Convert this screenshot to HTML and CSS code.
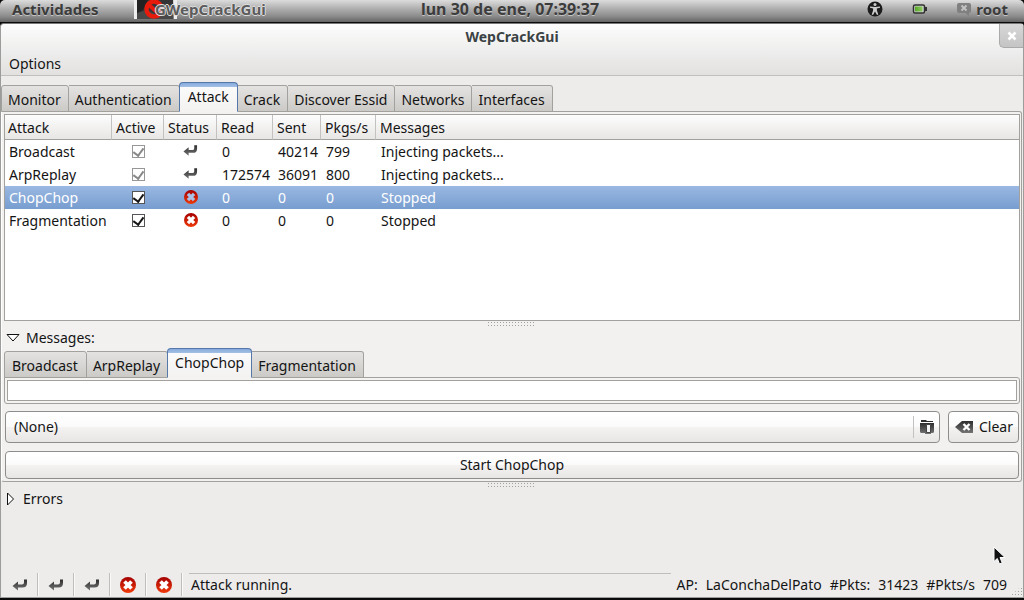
FILE: index.html
```html
<!DOCTYPE html>
<html lang="es">
<head>
<meta charset="utf-8">
<title>WepCrackGui</title>
<link rel="stylesheet" href="styles.css">
</head>
<body>
<svg class="defs" aria-hidden="true">
  <defs>
    <linearGradient id="red" x1="0" y1="0" x2="0" y2="1"><stop offset="0" stop-color="#a40000"/><stop offset="1" stop-color="#f03a0a"/></linearGradient>
    <linearGradient id="grey" x1="0" y1="0" x2="0" y2="1"><stop offset="0" stop-color="#2e2e2e"/><stop offset="1" stop-color="#747474"/></linearGradient>
    <linearGradient id="green" x1="0" y1="0" x2="1" y2="0"><stop offset="0" stop-color="#58a828"/><stop offset="1" stop-color="#8ccb62"/></linearGradient>
  </defs>
  <symbol id="enter" viewBox="0 0 16 16"><path fill="url(#grey)" d="M.5 9 6 4.500V7.500h4q2 0 2-2V2.500h3V6q0 4.500-4.500 4.500H6v3z"/></symbol>
  <symbol id="stop" viewBox="0 0 16 16"><circle cx="8" cy="8" r="8" fill="url(#red)"/><path d="M4.500 4.500 11.500 11.500M11.500 4.500 4.500 11.500" stroke="currentColor" stroke-width="3.800"/></symbol>
</svg>

<header class="panel">
  <button class="panel-item activities">Actividades</button>
  <button class="panel-item app">
    <svg class="app-icon" width="43" height="19" viewBox="0 0 43 19" aria-hidden="true">
      <path fill="#eee" d="M0 0h3v19H0zM40 0h3v19h-3z"/><path fill="#343434" d="M3 0h36v19H3z"/>
      <path fill="#484848" d="m3 13 10-3 8 4 18-3v8H3z"/><path fill="#222" d="M3 0h11L9 10 3 13z"/>
      <circle cx="20" cy="9" r="7.500" fill="none" stroke="#e61b0c" stroke-width="4.500"/><path d="m14 4 11 10" stroke="#e61b0c" stroke-width="4"/>
      <path d="m23 8 5 2" stroke="#f7776b" stroke-width="3"/>
    </svg>
    <span class="app-name">GWepCrackGui</span>
  </button>
  <time class="clock">lun 30 de ene, 07:39:37</time>
  <div class="tray">
    <svg width="16" height="16" viewBox="0 0 16 16" role="img" aria-label="Accesibilidad"><circle cx="8" cy="8" r="7.500" fill="#1c1c1c"/><circle cx="8" cy="3.600" r="1.500" fill="#ccc"/><path fill="#ccc" d="M3 5.500 8 6l5-.5v1.300l-3.200.7.200 2.300 1.300 3.700-1.300.5L8 10.500 6 14l-1.300-.5L6 9.800l.2-2.300L3 6.800z"/></svg>
    <svg width="16" height="12" viewBox="0 0 16 12" role="img" aria-label="Batería"><rect x="1.500" y="2" width="11" height="8" rx="1.500" fill="#d5d5d5" stroke="#303030" stroke-width="1.500"/><path fill="#303030" d="M13 4h2v4h-2z"/><path fill="url(#green)" d="M3 3.500h7.500v5H3z"/></svg>
    <button class="panel-item user"><svg width="14" height="13" viewBox="0 0 14 13" aria-hidden="true"><path fill="#808080" d="M2 0h10q2 0 2 2v6q0 2-2 2v3l-3.500-3H2Q0 10 0 8V2Q0 0 2 0z"/><path d="m4.500 2.500 5 5m0-5-5 5" stroke="#c4c4c4" stroke-width="1.800"/></svg>root</button>
  </div>
</header>

<main class="window">
  <div class="chrome">
    <h1 class="title">WepCrackGui</h1>
    <button class="close" aria-label="Cerrar"><svg width="10" height="10" viewBox="0 0 10 10" aria-hidden="true"><path d="m1.500 1.500 7 7m0-7-7 7" stroke="#fff" stroke-width="2.600"/></svg></button>
    <nav class="menubar"><button class="menu">Options</button></nav>
  </div>

  <div class="tabs main-tabs" role="tablist">
    <button class="tab" role="tab">Monitor</button>
    <button class="tab" role="tab">Authentication</button>
    <button class="tab active" role="tab" aria-selected="true">Attack</button>
    <button class="tab" role="tab">Crack</button>
    <button class="tab" role="tab">Discover Essid</button>
    <button class="tab" role="tab">Networks</button>
    <button class="tab" role="tab">Interfaces</button>
  </div>

  <section class="page">
    <div class="tree">
      <table class="list">
        <colgroup><col class="c-attack"><col class="c-active"><col class="c-status"><col class="c-read"><col class="c-sent"><col class="c-rate"><col></colgroup>
        <thead><tr><th>Attack</th><th>Active</th><th>Status</th><th>Read</th><th>Sent</th><th>Pkgs/s</th><th>Messages</th></tr></thead>
        <tbody>
          <tr><td>Broadcast</td><td class="mid"><input type="checkbox" aria-label="Broadcast" checked disabled></td><td class="mid"><svg class="cell-icon enter"><use href="#enter"/></svg></td><td>0</td><td>40214</td><td>799</td><td>Injecting packets...</td></tr>
          <tr><td>ArpReplay</td><td class="mid"><input type="checkbox" aria-label="ArpReplay" checked disabled></td><td class="mid"><svg class="cell-icon enter"><use href="#enter"/></svg></td><td>172574</td><td>36091</td><td>800</td><td>Injecting packets...</td></tr>
          <tr class="selected"><td>ChopChop</td><td class="mid"><input type="checkbox" aria-label="ChopChop" checked></td><td class="mid"><svg class="cell-icon stop"><use href="#stop"/></svg></td><td>0</td><td>0</td><td>0</td><td>Stopped</td></tr>
          <tr><td>Fragmentation</td><td class="mid"><input type="checkbox" aria-label="Fragmentation" checked></td><td class="mid"><svg class="cell-icon stop"><use href="#stop"/></svg></td><td>0</td><td>0</td><td>0</td><td>Stopped</td></tr>
        </tbody>
      </table>
    </div>
    <div class="grip"></div>

    <button class="expander" aria-expanded="true"><svg width="14" height="8" viewBox="0 0 14 8" aria-hidden="true"><path d="M1 .5h12L7 7z" fill="#fff" stroke="#111"/></svg>Messages:</button>
    <div class="tabs sub-tabs" role="tablist">
      <button class="tab" role="tab">Broadcast</button>
      <button class="tab" role="tab">ArpReplay</button>
      <button class="tab active" role="tab" aria-selected="true">ChopChop</button>
      <button class="tab" role="tab">Fragmentation</button>
    </div>
    <div class="subpage"><textarea class="log" rows="1" aria-label="ChopChop messages"></textarea></div>

    <div class="file-row">
      <button class="btn chooser"><span class="file">(None)</span>
        <svg width="16" height="16" viewBox="0 0 16 16" aria-hidden="true"><path fill="#2b2b2b" d="M2 1h5l1 1h6v1H2z"/><path fill="url(#grey)" d="M1 4h14v8.500q0 1.500-1.500 1.500H12v1H6v-1H2.500Q1 14 1 12.500z"/><path fill="#f4f4f4" stroke="#444" d="M7.500 5.500h4v8h-4z"/></svg>
      </button>
      <button class="btn clear"><svg width="18" height="14" viewBox="0 0 18 14" aria-hidden="true"><path fill="url(#grey)" d="M0 7 7 1h11v12H7z"/><path d="m8.500 4 6 6m0-6-6 6" stroke="#fff" stroke-width="2.400"/></svg>Clear</button>
    </div>
    <button class="btn start">Start ChopChop</button>
  </section>
  <div class="grip"></div>

  <section class="errors">
    <button class="expander" aria-expanded="false"><svg width="8" height="14" viewBox="0 0 8 14" aria-hidden="true"><path d="M1.500 1v12L7.500 7z" fill="#fff" stroke="#111"/></svg>Errors</button>
  </section>

  <footer class="statusbar">
    <span class="slot"><svg class="status-icon"><use href="#enter"/></svg></span>
    <span class="slot"><svg class="status-icon"><use href="#enter"/></svg></span>
    <span class="slot"><svg class="status-icon"><use href="#enter"/></svg></span>
    <span class="slot"><svg class="status-icon stop"><use href="#stop"/></svg></span>
    <span class="slot"><svg class="status-icon stop"><use href="#stop"/></svg></span>
    <span class="status-text">Attack running.</span>
    <span class="counters"><span>AP:</span><span>LaConchaDelPato</span><span>#Pkts:</span><span>31423</span><span>#Pkts/s</span><span>709</span></span>
    <span class="resize"></span>
  </footer>
</main>

<svg class="cursor" width="14" height="20" viewBox="0 0 14 20" aria-hidden="true"><path d="M1 1v14.500l3.300-3 2.200 5.500 2.700-1.200L7 11.500h5z" fill="#111" stroke="#fff"/></svg>
</body>
</html>
```
FILE: styles.css
```css
* { box-sizing: border-box; }

body {
  margin: 0;
  height: 100vh;
  display: flex;
  flex-direction: column;
  padding-bottom: 2px;
  background: #0a0a0a;
  color: #141414;
  font: 14px/20px "Noto Sans", "Open Sans", sans-serif;
  overflow: hidden;
}

button, textarea { font: inherit; color: inherit; }
button { margin: 0; padding: 0; border: 0; background: none; white-space: nowrap; }
svg { flex: none; display: block; }
.defs { position: absolute; width: 0; height: 0; }

/* Desktop panel */
.panel {
  display: grid;
  grid-template-columns: 1fr auto 1fr;
  align-items: center;
  height: 23px;
  padding: 0 16px 4px 12px;
  border-bottom: 1px solid #0a0a0a;
  border-radius: 5px 5px 0 0;
  background: linear-gradient(#dcdcdc, #b4b4b4 35%, #8a8a8a 75%, #646464);
  font-size: 15px;
  font-weight: bold;
  line-height: 18px;
  color: #3c3c3c;
  text-shadow: 0 1px 0 #c4c4c4;
}
.panel-item { text-shadow: inherit; }
.activities { grid-area: 1 / 1; justify-self: start; }
.app { grid-area: 1 / 1; justify-self: start; display: flex; align-items: center; margin-left: 122px; height: 18px; }
.app-name { margin-left: -22px; color: #5c5c5c; text-shadow: 1px 0 0 #ddd, -1px 0 0 #ddd, 0 1px 0 #ddd, 0 -1px 0 #ddd; }
.clock { grid-area: 1 / 2; font-size: 16px; }
.tray { grid-area: 1 / 3; justify-self: end; display: flex; align-items: center; gap: 29px; }
.user { display: flex; align-items: center; gap: 5px; }

/* Application window */
.window {
  flex: 1;
  min-height: 0;
  display: flex;
  flex-direction: column;
  border: 1px solid #9c9c9a;
  border-top-color: #777;
  border-radius: 4px 4px 0 0;
  background: #edeceb;
}
.chrome {
  display: grid;
  grid-template-columns: 1fr;
  border-bottom: 1px solid #c0bfbd;
  border-radius: 4px 4px 0 0;
  background: linear-gradient(#fcfcfc, #e2e1e0);
}
.title { grid-area: 1 / 1; margin: 0; padding: 3px 0; text-align: center; font-size: 14px; line-height: 20px; color: #3a4244; }
.close {
  grid-area: 1 / 1;
  justify-self: end;
  align-self: start;
  display: grid;
  place-items: center;
  width: 24px;
  height: 24px;
  border: solid #aaa;
  border-width: 0 0 1px 1px;
  border-radius: 0 0 0 5px;
  background: linear-gradient(#d8d8d8, #c4c4c4);
}
.menubar { padding: 4px 8px 1px; }

/* Notebook tabs */
.tabs { display: flex; align-items: flex-end; position: relative; margin-bottom: -1px; }
.main-tabs { margin-top: 6px; }
.tab {
  height: 27px;
  padding: 4px 7px 1px 6px;
  border: 1px solid #a3a19e;
  border-left-width: 0;
  border-radius: 0 3px 0 0;
  background: linear-gradient(#e4e3e1, #cccac7);
}
.tab:first-child { border-left-width: 1px; border-radius: 3px 3px 0 0; }
.tab.active {
  height: 30px;
  padding: 2px 8px;
  border: 1px solid #5578aa;
  border-bottom-color: #f4f3f2;
  border-radius: 4px 4px 0 0;
  margin-left: -1px;
  background: linear-gradient(#86abdc 0, #a5c0e4 4px, #fbfbfb 4px, #f3f2f1);
}
.sub-tabs .tab:first-child { padding-left: 7px; padding-right: 8px; }
.sub-tabs .tab.active { padding: 2px 7px; }

.page {
  flex: 1;
  min-height: 0;
  display: flex;
  flex-direction: column;
  margin-right: 1px;
  padding: 2px 2px 2px 3px;
  border: 1px solid #a3a19e;
  border-left-color: #fff;
  border-radius: 0 3px 3px 3px;
  background: #f2f1f0;
}

/* Attack list */
.tree { flex: 1; min-height: 0; border: 1px solid #a3a19e; margin: 0 -1px; background: #fff; overflow: hidden; }
.list { width: 100%; table-layout: fixed; border-collapse: separate; border-spacing: 0; }
.c-attack { width: 107px; }
.c-active { width: 52px; }
.c-status { width: 53px; }
.c-read { width: 56px; }
.c-sent { width: 48px; }
.c-rate { width: 55px; }
th {
  height: 25px;
  padding: 2px 0 0 4px;
  border-bottom: 1px solid #a3a19e;
  border-right: 1px solid #c4c2c0;
  background: linear-gradient(#fdfdfd, #e7e6e4);
  font-weight: normal;
  text-align: left;
  white-space: nowrap;
}
th:first-child { padding-left: 3px; }
th:last-child { border-right: 0; }
td { height: 23px; padding: 0 0 0 5px; white-space: nowrap; }
td:first-child { padding-left: 4px; }
.mid { padding: 0; }
.selected { background: linear-gradient(#9ab8e2, #779dcf); color: #fff; }
.cell-icon { width: 14px; height: 14px; margin: 0 auto 2px; }
.cell-icon.enter { width: 15px; height: 15px; }
.stop { color: #fff; }
.selected .stop { color: #a9c3e8; }
input[type="checkbox"] {
  appearance: none;
  display: grid;
  place-items: center;
  width: 13px;
  height: 13px;
  margin: 0 auto 1px;
  border: 1px solid #555;
  background: #fff;
}
input[type="checkbox"]::before {
  content: "";
  width: 5px;
  height: 8px;
  margin-bottom: 2px;
  border: solid #161616;
  border-width: 0 2px 2px 0;
  transform: rotate(36deg);
}
input[type="checkbox"]:disabled { border-color: #979797; }
input[type="checkbox"]:disabled::before { border-color: #888; }

.grip {
  flex: none;
  align-self: center;
  width: 48px;
  height: 6px;
  background: conic-gradient(at 1px 1px, transparent 75%, #a3a19e 0) 0 1px / 3px 3px;
}

.expander { display: flex; align-items: center; gap: 6px; }
.page > .expander { align-self: flex-start; margin: 1px 0 0 1px; }
.sub-tabs { margin-left: -1px; }
.subpage { padding: 2px; margin: 0 -1px; border: 1px solid #a3a19e; border-radius: 0 3px 3px 3px; background: #f4f3f2; }
.log { display: block; width: 100%; height: 21px; padding: 0 3px; border: 1px solid #a3a19e; background: #fff; resize: none; overflow: hidden; outline: 0; }

.btn {
  display: flex;
  align-items: center;
  border: 1px solid #8f8d8b;
  border-radius: 4px;
  background: linear-gradient(#fff, #fbfbfb 48%, #f4f3f2 50%, #e7e6e4);
}
.file-row { display: flex; gap: 8px; margin-top: 7px; }
.chooser { flex: 1; min-width: 0; height: 32px; padding: 0 4px 0 8px; }
.file { flex: 1; margin-right: 5px; border-right: 1px solid #c4c2c0; text-align: left; line-height: 22px; }
.clear { height: 32px; padding: 0 5px 0 6px; gap: 6px; }
.start { justify-content: center; height: 28px; margin-top: 8px; }

.errors { flex: none; height: 85px; padding: 1px 5px; }
.errors .expander { gap: 9px; }

/* Status bar */
.statusbar { flex: none; display: flex; align-items: stretch; height: 24px; margin-left: 1px; }
.slot { display: grid; place-items: center; width: 36px; border-right: 1px solid #c0bebc; box-shadow: 1px 0 0 #fafafa; margin-bottom: 1px; }
.status-icon { width: 16px; height: 16px; }
.status-text { flex: 1; margin: 0 6px 0 7px; padding: 1px 2px; border-top: 1px solid #c0bebc; }
.counters { display: flex; gap: 8px; padding-top: 2px; white-space: nowrap; }
.resize {
  align-self: flex-end;
  width: 14px;
  height: 12px;
  margin-left: 2px;
  background: conic-gradient(at 1px 1px, transparent 75%, #a3a19e 0) 0 0 / 3px 3px;
  clip-path: polygon(100% 0, 100% 100%, 0 100%);
}

.cursor { position: absolute; right: 17px; bottom: 34px; }
```
